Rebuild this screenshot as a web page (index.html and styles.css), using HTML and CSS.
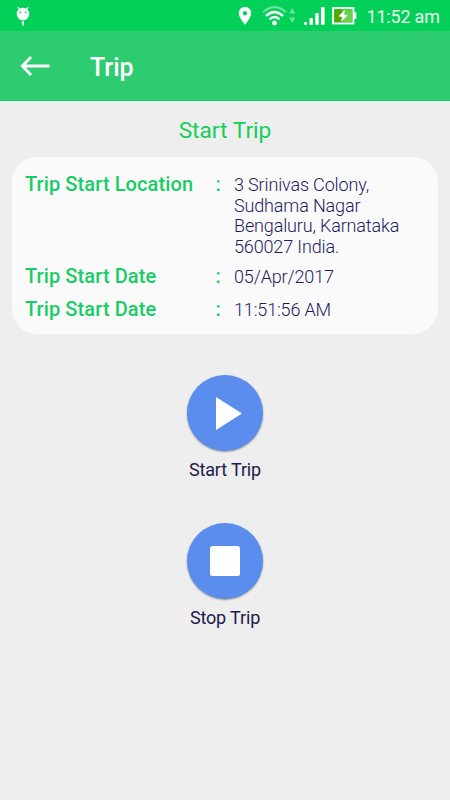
FILE: index.html
```
<!DOCTYPE html>
<html lang="en">
<head>
    <meta charset="UTF-8">
    <meta name="viewport" content="width=device-width, initial-scale=1.0">
    <title>Trip</title>
    <link rel="stylesheet" href="styles.css">
</head>
<body>
    <!-- Status bar -->
    <div class="status-bar">
        <svg class="debug-icon" width="14" height="20" viewBox="0 0 14 20">
            <path d="M2 1L4 4M12 1L10 4" stroke="#fff" stroke-width="1.2"/>
            <circle cx="7" cy="8" r="6.3" fill="#fff"/>
            <circle cx="4.4" cy="6.3" r="0.9" fill="#03d058"/>
            <circle cx="9.6" cy="6.3" r="0.9" fill="#03d058"/>
            <path d="M7 15V19.4" stroke="#fff" stroke-width="1.8"/>
        </svg>
        <div class="status-icons">
            <svg width="14" height="18" viewBox="0 0 14 18">
                <path fill="#fff" fill-rule="evenodd" d="M7 0C3.4 0 .8 2.7 .8 6.2C.8 10.5 7 17.7 7 17.7S13.2 10.5 13.2 6.2C13.2 2.7 10.6 0 7 0ZM7 4a2.2 2.2 0 1 1 0 4.4a2.2 2.2 0 0 1 0-4.4Z"/>
            </svg>
            <svg class="wifi" width="34" height="20" viewBox="0 0 34 20" fill="none" stroke="#fff">
                <path d="M1 6.2Q12.5-4 24 6.2" stroke-width="2" opacity="0.4"/>
                <path d="M4 9.8Q12.5 2 21 9.8" stroke-width="2.4"/>
                <path d="M7.5 13.4Q12.5 8.8 17.5 13.4" stroke-width="2.4"/>
                <circle cx="12.5" cy="17" r="2.4" fill="#fff" stroke="none"/>
                <path d="M27 7.5L30.2 2L33.4 7.5ZM27 11.5L30.2 17L33.4 11.5Z" fill="#fff" stroke="none" opacity="0.4"/>
            </svg>
            <svg class="signal" width="21" height="18" viewBox="0 0 21 18" fill="#fff">
                <rect x="0" y="15" width="3" height="3" rx="1"/>
                <rect x="5.5" y="11" width="3.4" height="7" rx="1"/>
                <rect x="11.3" y="6" width="3.4" height="12" rx="1"/>
                <rect x="17" y="0" width="3.6" height="18" rx="1"/>
            </svg>
            <svg class="battery" width="25" height="18" viewBox="0 0 25 18">
                <rect x="1" y="1" width="20.5" height="15.5" fill="#2ec94c" stroke="#fff" stroke-width="1.8"/>
                <rect x="2.6" y="2.6" width="7.5" height="12.3" fill="#55a500"/>
                <rect x="10.1" y="2.6" width="9.8" height="12.3" fill="#6bd350"/>
                <rect x="22" y="5.5" width="2.3" height="6.5" fill="#fff"/>
                <path d="M13 2.8L6.5 9.2L10.3 10.2L8.5 15L15.8 8.4L12 7.5Z" fill="#fff"/>
            </svg>
            <span class="clock">11:52 am</span>
        </div>
    </div>

    <!-- App bar -->
    <div class="app-bar">
        <svg class="back" width="30" height="20" viewBox="0 0 30 20" fill="none" stroke="#fff" stroke-width="2.8">
            <path d="M11 1L2.3 10L11 19M2 10H29.5"/>
        </svg>
        <h1>Trip</h1>
    </div>

    <h2 class="section-title">Start Trip</h2>

    <div class="card">
        <div class="row">
            <span class="label">Trip Start Location</span>
            <span class="colon">:</span>
            <span class="value">3 Srinivas Colony,<br>Sudhama Nagar<br>Bengaluru, Karnataka<br>560027 India.</span>
        </div>
        <div class="row">
            <span class="label">Trip Start Date</span>
            <span class="colon">:</span>
            <span class="value">05/Apr/2017</span>
        </div>
        <div class="row">
            <span class="label">Trip Start Date</span>
            <span class="colon">:</span>
            <span class="value">11:51:56 AM</span>
        </div>
    </div>

    <!-- Trip buttons -->
    <div class="actions">
        <div class="action">
            <button class="round-btn" aria-label="Start">
                <svg width="76" height="76" viewBox="0 0 76 76"><path d="M29 22L55 38.5L29 55Z" fill="#fff"/></svg>
            </button>
            <span class="action-text">Start Trip</span>
        </div>
        <div class="action">
            <button class="round-btn" aria-label="Stop">
                <svg width="76" height="76" viewBox="0 0 76 76"><rect x="23" y="23" width="30" height="30" rx="2.5" fill="#fff"/></svg>
            </button>
            <span class="action-text">Stop Trip</span>
        </div>
    </div>
</body>
</html>
```

FILE: styles.css
```
* {
    box-sizing: border-box;
}
body {
    margin: 0;
    height: 800px;
    overflow: hidden;
    background-color: #eeeeee;
    font-family: Roboto, sans-serif;
}
svg {
    display: block;
    flex: none;
}
.status-bar {
    display: flex;
    align-items: center;
    justify-content: space-between;
    height: 31px;
    padding: 0 10px 0 15.5px;
    background-color: #03d058;
}
.status-icons {
    display: flex;
    align-items: center;
}
.wifi {
    margin-left: 10px;
}
.signal {
    margin-left: 8px;
}
.battery {
    margin-left: 7px;
}
.clock {
    width: 73.5px;
    margin-left: 9.5px;
    padding-top: 2px;
    font-size: 18px;
    line-height: 22px;
    letter-spacing: -0.2px;
    white-space: nowrap;
    color: #e6fbea;
}
.app-bar {
    display: flex;
    align-items: center;
    height: 70px;
    padding: 1px 20px 0;
    background-color: #2ecc71;
    border-bottom: 1px solid #13cd63;
    color: #fff;
}
.app-bar h1 {
    margin: 4px 0 0 40px;
    font-size: 25px;
    font-weight: 500;
    line-height: 30px;
}
.section-title {
    margin: 16px 0 12px;
    font-size: 22.7px;
    font-weight: 400;
    line-height: 28px;
    text-align: center;
    color: #13ce58;
}
.card {
    display: flex;
    flex-direction: column;
    gap: 8px;
    height: 177px;
    margin: 0 12px;
    padding: 17px 13px 0;
    border-radius: 25px;
    background-color: #fafafa;
}
.row {
    display: flex;
    min-height: 25px;
}
.label, .colon {
    font-size: 20px;
    font-weight: 500;
    line-height: 21px;
    letter-spacing: 0.1px;
    color: #18cc66;
}
.label {
    width: 190.5px;
}
.colon {
    width: 18.5px;
}
.value {
    padding-top: 1px;
    font-size: 18px;
    font-weight: 300;
    line-height: 20.7px;
    letter-spacing: -0.15px;
    color: #1c1c60;
}
.actions {
    display: flex;
    flex-direction: column;
    align-items: center;
    gap: 42px;
    margin-top: 41px;
}
.action {
    display: flex;
    flex-direction: column;
    align-items: center;
}
.round-btn {
    width: 76px;
    height: 76px;
    padding: 0;
    border: none;
    border-radius: 50%;
    background-color: #5b8dee;
    box-shadow: 0 1px 2px rgba(0, 0, 0, 0.4);
}
.action-text {
    margin-top: 8px;
    font-size: 18px;
    line-height: 22px;
    letter-spacing: -0.15px;
    color: #1c1c4c;
}
```
